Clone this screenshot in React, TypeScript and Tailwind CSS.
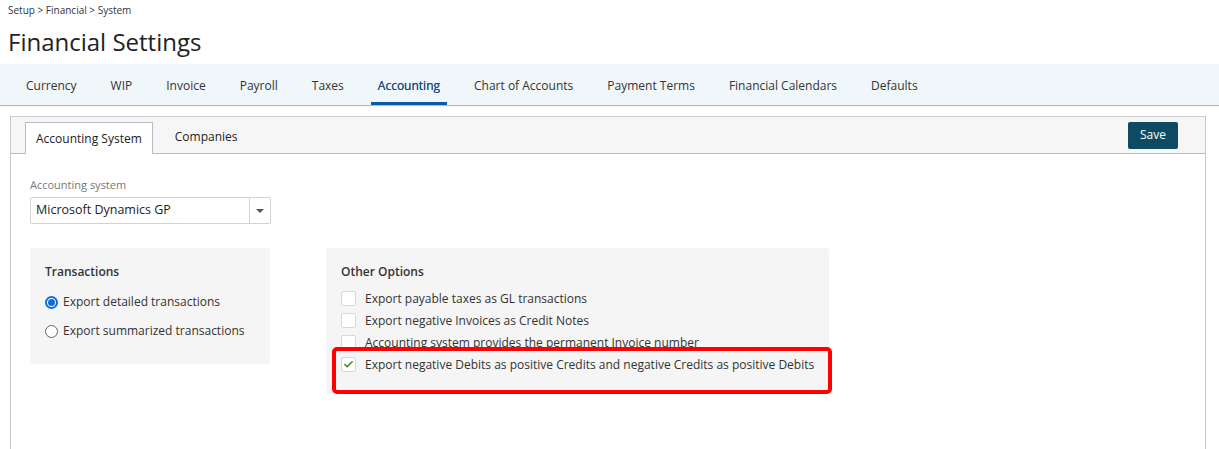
import { Check } from "lucide-react";

const navItems = [
  "Currency",
  "WIP",
  "Invoice",
  "Payroll",
  "Taxes",
  "Accounting",
  "Chart of Accounts",
  "Payment Terms",
  "Financial Calendars",
  "Defaults",
];

const options = [
  "Export payable taxes as GL transactions",
  "Export negative Invoices as Credit Notes",
  "Accounting system provides the permanent Invoice number",
];

function Box({ checked = false }: { checked?: boolean }) {
  return (
    <span className="w-[15px] h-[15px] shrink-0 rounded-[2px] border border-[#d8d8d8] bg-white flex items-center justify-center">
      {checked && <Check size={11} strokeWidth={3.5} className="text-[#4a8a2a]" />}
    </span>
  );
}

export default function App() {
  return (
    <div
      className="w-[1219px] h-[449px] bg-white text-[#222] overflow-hidden"
      style={{ fontFamily: '"Open Sans", "Liberation Sans", sans-serif' }}
    >
      {/* Header */}
      <div className="px-2 pt-[3px] text-[10px] text-[#333] h-[14px] leading-[14px]">
        Setup &gt; Financial &gt; System
      </div>
      <h1 className="px-2 mt-[12px] text-[24px] leading-[32px] text-[#222] h-[38px]">
        Financial Settings
      </h1>

      {/* Main nav */}
      <nav className="h-[42px] bg-[#eff7fb] border-b border-[#aeb8c6] flex items-stretch pl-[9px] shadow-[0_1px_2px_rgba(0,0,0,0.06)]">
        {navItems.map((item) => {
          const active = item === "Accounting";
          return (
            <div
              key={item}
              className={`mx-[10px] px-[7px] pt-[5px] flex items-center text-[12px] border-b-[3px] ${
                active
                  ? "border-[#0b5aa8] text-[#1c4f7c] [text-shadow:0_0_0.3px_#1c4f7c]"
                  : "border-transparent text-[#333]"
              }`}
            >
              {item}
            </div>
          );
        })}
      </nav>

      {/* Panel */}
      <div className="mx-[10px] mr-[13px] mt-[10px] border border-[#c9c9c9] border-b-0 h-[340px]">
        <div className="h-[37px] bg-[#f6f6f6] border-b border-[#b4bcc8] flex items-end pl-[14px] pr-[27px] relative">
          <div className="h-[32px] px-[10px] bg-white border border-b-0 border-[#b4bcc8] -mb-px flex items-center text-[12px] text-[#222]">
            Accounting System
          </div>
          <div className="h-[32px] px-[22px] flex items-center text-[12px] text-[#222]">
            Companies
          </div>
          <div className="ml-auto self-center">
            <button className="h-[27px] w-[50px] rounded-[2px] bg-[#0e4a62] text-white text-[12px]">
              Save
            </button>
          </div>
        </div>

        <div className="px-[19px] pt-[24px]">
          <div className="text-[11px] text-[#777] leading-[14px]">Accounting system</div>
          <div className="mt-[5px] w-[241px] h-[27px] border border-[#d2d2d2] rounded-[2px] flex items-stretch">
            <div className="flex-1 flex items-center px-[5px] text-[12.5px] text-[#222]">
              Microsoft Dynamics GP
            </div>
            <div className="w-[21px] border-l border-[#d2d2d2] flex items-center justify-center">
              <span className="w-0 h-0 border-l-[4px] border-r-[4px] border-t-[4px] border-l-transparent border-r-transparent border-t-[#555]" />
            </div>
          </div>

          <div className="mt-[24px] flex items-start gap-[56px]">
            <div className="w-[240px] h-[116px] bg-[#f5f5f5] rounded-[2px] px-[15px] pt-[15px]">
              <div className="text-[12px] font-semibold text-[#333] leading-[18px]">Transactions</div>
              <label className="mt-[12px] flex items-center gap-[5px] text-[12px] text-[#333] h-[18px]">
                <span className="w-[13px] h-[13px] rounded-full border-2 border-[#0a6ee0] bg-white flex items-center justify-center">
                  <span className="w-[7px] h-[7px] rounded-full bg-[#0a6ee0]" />
                </span>
                Export detailed transactions
              </label>
              <label className="mt-[11px] flex items-center gap-[5px] text-[12px] text-[#333] h-[18px]">
                <span className="w-[13px] h-[13px] rounded-full border border-[#666] bg-white" />
                Export summarized transactions
              </label>
            </div>

            <div className="relative w-[503px] h-[146px] bg-[#f5f5f5] rounded-[2px] px-[15px] pt-[15px]">
              <div className="text-[12px] font-semibold text-[#333] leading-[18px]">Other Options</div>
              <div className="mt-[9px] flex flex-col gap-[5px]">
                {options.map((o) => (
                  <label key={o} className="flex items-center gap-[9px] text-[12px] text-[#333] h-[17px]">
                    <Box />
                    {o}
                  </label>
                ))}
              </div>
              {/* highlight annotation */}
              <div className="absolute left-[6px] top-[99px] w-[500px] h-[47px] border-4 border-[#ff0000] rounded-[5px] bg-[#f5f5f5] pl-[5px] pt-[5px]">
                <label className="flex items-center gap-[9px] text-[12px] text-[#333] h-[17px]">
                  <Box checked />
                  Export negative Debits as positive Credits and negative Credits as positive Debits
                </label>
              </div>
            </div>
          </div>
        </div>
      </div>
    </div>
  );
}
